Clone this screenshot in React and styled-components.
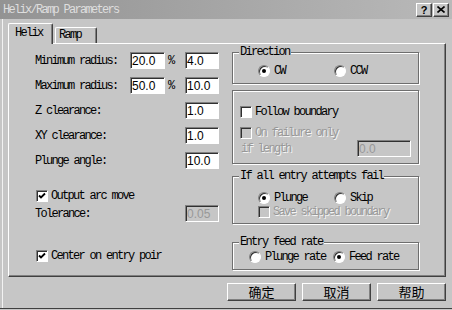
import React from "react";
import styled, { createGlobalStyle } from "styled-components";

const face = "#c6c6c6";
const mono = `"Liberation Mono", "DejaVu Sans Mono", monospace`;

const GlobalStyle = createGlobalStyle`
  html, body { margin: 0; padding: 0; background: ${face}; }
  * { box-sizing: border-box; }
`;

const Window = styled.div`
  width: 452px;
  height: 309px;
  background: ${face};
  border-bottom: 1px solid #404040;
  display: flex;
  flex-direction: column;
  font-family: ${mono};
  font-size: 12px;
  letter-spacing: -1.7px;
  color: #000;
`;

const TitleBar = styled.div`
  height: 19px;
  display: flex;
  align-items: center;
  padding: 0 3px;
  background: linear-gradient(90deg, #939393, #b9b9b9);
  color: #dedede;
`;

const Title = styled.span`
  flex: 1;
`;

const TitleButton = styled.span`
  width: 16px;
  height: 14px;
  margin-left: ${(p) => (p.$gap ? "1px" : "0")};
  display: flex;
  align-items: center;
  justify-content: center;
  background: ${face};
  border: 1px solid;
  border-color: #fff #404040 #404040 #fff;
  box-shadow: inset -1px -1px 0 #808080;
  font-family: "Liberation Sans", sans-serif;
  font-weight: bold;
  font-size: 11px;
  letter-spacing: 0;
  color: #000;
`;

const Body = styled.div`
  flex: 1;
  margin: 0 2px;
  border-left: 1px solid #f2f2f2;
  padding: 4px 4px 0 5px;
  display: flex;
  flex-direction: column;
`;

const TabRow = styled.div`
  height: 20px;
  display: flex;
  align-items: flex-end;
`;

const Tab = styled.div`
  position: relative;
  z-index: 1;
  height: ${(p) => (p.$active ? "21px" : "16px")};
  width: ${(p) => (p.$active ? "45px" : "42px")};
  margin-left: ${(p) => (p.$active ? "0" : "2px")};
  margin-bottom: ${(p) => (p.$active ? "-1px" : "0")};
  padding-left: ${(p) => (p.$active ? "6px" : "3px")};
  padding-bottom: ${(p) => (p.$active ? "3px" : "1px")};
  display: flex;
  align-items: center;
  background: ${face};
  border-top: 1px solid #fff;
  border-left: 1px solid #fff;
  border-right: 1px solid #404040;
  box-shadow: inset -1px 0 0 #808080;
  border-radius: 2px 2px 0 0;
`;

const Panel = styled.div`
  height: 234px;
  display: flex;
  border-top: 1px solid #fff;
  border-left: 1px solid #fff;
  border-right: 1px solid #404040;
  border-bottom: 1px solid #404040;
  box-shadow: inset -1px -1px 0 #808080;
`;

const LeftColumn = styled.div`
  width: 223px;
  padding: 8px 0 0 26px;
  display: flex;
  flex-direction: column;
`;

const RightColumn = styled.div`
  width: 187px;
  padding-top: 8px;
  display: flex;
  flex-direction: column;
`;

const FieldRow = styled.div`
  display: grid;
  grid-template-columns: 95px 35px 20px 34px;
  align-items: center;
  height: 17px;
  margin-top: ${(p) => p.$top || 0}px;
`;

const Percent = styled.span`
  padding-left: 3px;
`;

const Field = styled.input`
  width: ${(p) => p.$w || 35}px;
  height: 17px;
  grid-column: ${(p) => p.$col || "auto"};
  padding: 0 0 0 1px;
  border: 1px solid;
  border-color: #808080 #fff #fff #808080;
  box-shadow: inset 1px 1px 0 #303030;
  background: ${(p) => (p.disabled ? face : "#fff")};
  color: ${(p) => (p.disabled ? "#989898" : "#000")};
  font-family: "Liberation Sans", Arial, sans-serif;
  font-size: 12px;
  letter-spacing: 0;
  outline: none;
`;

const CheckRow = styled.label`
  display: flex;
  align-items: center;
  gap: 3px;
  height: 12px;
  margin-top: ${(p) => p.$top || 0}px;
  padding-left: ${(p) => p.$indent || 0}px;
  color: ${(p) => (p.$disabled ? "#989898" : "#000")};
  text-shadow: ${(p) => (p.$disabled ? "1px 1px 0 #f4f4f4" : "none")};
`;

const Box = styled.span`
  width: 12px;
  height: 12px;
  flex: none;
  display: flex;
  align-items: center;
  justify-content: center;
  border: 1px solid;
  border-color: #808080 #fff #fff #808080;
  box-shadow: inset 1px 1px 0 #303030;
  background: ${(p) => (p.$disabled ? face : "#fff")};
`;

const Check = () => (
  <svg width="8" height="8" viewBox="0 0 8 8">
    <path d="M1 3.5 L3 5.5 L7 1.5" fill="none" stroke="#000" strokeWidth="1.8" />
  </svg>
);

const Checkbox = ({ checked, disabled, children, ...rest }) => (
  <CheckRow $disabled={disabled} {...rest}>
    <Box $disabled={disabled}>{checked && <Check />}</Box>
    <span>{children}</span>
  </CheckRow>
);

const Group = styled.div`
  position: relative;
  height: ${(p) => p.$h}px;
  margin-top: ${(p) => p.$top || 0}px;
  padding: ${(p) => p.$pad};
  border: 1px solid #6e6e6e;
  box-shadow: 1px 1px 0 #fff, inset 1px 1px 0 #fff;
`;

const Legend = styled.span`
  position: absolute;
  top: -8px;
  left: 6px;
  padding: 0 1px;
  line-height: 14px;
  background: ${face};
`;

const RadioRow = styled.div`
  display: grid;
  grid-template-columns: ${(p) => p.$col}px auto;
  height: 12px;
  align-items: center;
`;

const RadioItem = styled.label`
  display: flex;
  align-items: center;
  gap: 4px;
`;

const Circle = styled.span`
  width: 12px;
  height: 12px;
  flex: none;
  border-radius: 50%;
  background: #fff;
  border: 1px solid;
  border-color: #808080 #fff #fff #808080;
  box-shadow: inset 1px 1px 0 #303030;
  display: flex;
  align-items: center;
  justify-content: center;

  &::after {
    content: "";
    width: 4px;
    height: 4px;
    border-radius: 50%;
    background: ${(p) => (p.$on ? "#000" : "transparent")};
  }
`;

const Radio = ({ on, children }) => (
  <RadioItem>
    <Circle $on={on} />
    <span>{children}</span>
  </RadioItem>
);

const LengthRow = styled.div`
  display: flex;
  align-items: center;
  justify-content: space-between;
  height: 17px;
  margin-top: 1px;
  padding-left: 1px;
  color: #989898;
  text-shadow: 1px 1px 0 #f4f4f4;
`;

const ButtonRow = styled.div`
  display: flex;
  justify-content: flex-end;
  gap: 6px;
  margin-top: 6px;
`;

const Button = styled.button`
  width: 69px;
  height: 18px;
  padding: 0;
  background: ${face};
  border: 1px solid;
  border-color: #fff #404040 #404040 #fff;
  box-shadow: inset -1px -1px 0 #808080;
  font-family: "Noto Sans CJK SC", sans-serif;
  font-size: 13px;
  line-height: 16px;
  color: #000;
`;

export default function App() {
  return (
    <>
      <GlobalStyle />
      <Window>
        <TitleBar>
          <Title>Helix/Ramp Parameters</Title>
          <TitleButton>?</TitleButton>
          <TitleButton $gap>
            <svg width="8" height="7" viewBox="0 0 8 7">
              <path d="M0.5 0.5 L7.5 6.5 M7.5 0.5 L0.5 6.5" stroke="#000" strokeWidth="1.6" />
            </svg>
          </TitleButton>
        </TitleBar>
        <Body>
          <TabRow>
            <Tab $active>Helix</Tab>
            <Tab>Ramp</Tab>
          </TabRow>
          <Panel>
            <LeftColumn>
              <FieldRow>
                <span>Minimum radius:</span>
                <Field defaultValue="20.0" readOnly />
                <Percent>%</Percent>
                <Field $w={34} defaultValue="4.0" readOnly />
              </FieldRow>
              <FieldRow $top={8}>
                <span>Maximum radius:</span>
                <Field defaultValue="50.0" readOnly />
                <Percent>%</Percent>
                <Field $w={34} defaultValue="10.0" readOnly />
              </FieldRow>
              <FieldRow $top={8}>
                <span>Z clearance:</span>
                <Field $w={34} $col={4} defaultValue="1.0" readOnly />
              </FieldRow>
              <FieldRow $top={8}>
                <span>XY clearance:</span>
                <Field $w={34} $col={4} defaultValue="1.0" readOnly />
              </FieldRow>
              <FieldRow $top={8}>
                <span>Plunge angle:</span>
                <Field $w={34} $col={4} defaultValue="10.0" readOnly />
              </FieldRow>
              <Checkbox checked $top={21} $indent={1}>
                Output arc move
              </Checkbox>
              <FieldRow $top={3}>
                <span>Tolerance:</span>
                <Field $w={34} $col={4} defaultValue="0.05" disabled />
              </FieldRow>
              <Checkbox checked $top={28} $indent={1}>
                Center on entry poir
              </Checkbox>
            </LeftColumn>
            <RightColumn>
              <Group $h={32} $pad="11px 0 0 25px">
                <Legend>Direction</Legend>
                <RadioRow $col={76}>
                  <Radio on>CW</Radio>
                  <Radio>CCW</Radio>
                </RadioRow>
              </Group>
              <Group $h={74} $top={6} $pad="15px 7px 0 7px">
                <Checkbox>Follow boundary</Checkbox>
                <Checkbox disabled $top={9}>
                  On failure only
                </Checkbox>
                <LengthRow>
                  <span>if length</span>
                  <Field $w={54} defaultValue="0.0" disabled />
                </LengthRow>
              </Group>
              <Group $h={48} $top={12} $pad="14px 0 0 25px">
                <Legend>If all entry attempts fail</Legend>
                <RadioRow $col={76}>
                  <Radio on>Plunge</Radio>
                  <Radio>Skip</Radio>
                </RadioRow>
                <Checkbox disabled $top={3}>
                  Save skipped boundary
                </Checkbox>
              </Group>
              <Group $h={28} $top={18} $pad="7px 0 0 16px">
                <Legend>Entry feed rate</Legend>
                <RadioRow $col={84}>
                  <Radio>Plunge rate</Radio>
                  <Radio on>Feed rate</Radio>
                </RadioRow>
              </Group>
            </RightColumn>
          </Panel>
          <ButtonRow>
            <Button>确定</Button>
            <Button>取消</Button>
            <Button>帮助</Button>
          </ButtonRow>
        </Body>
      </Window>
    </>
  );
}
